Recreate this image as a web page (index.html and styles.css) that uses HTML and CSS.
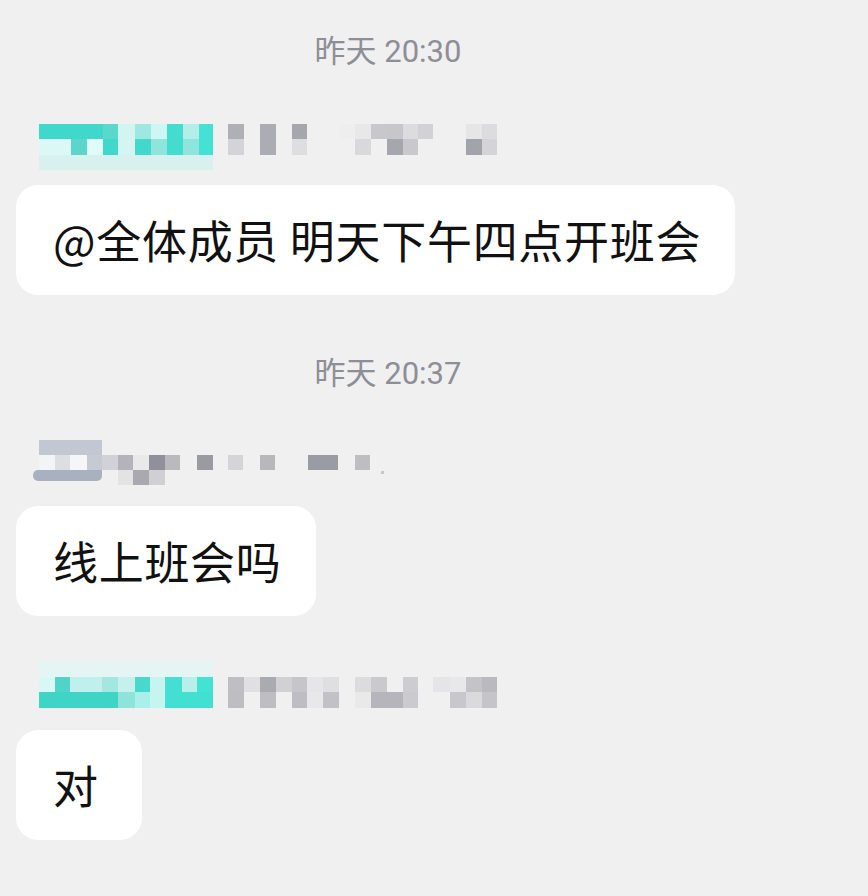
FILE: index.html
```html
<!DOCTYPE html>
<html lang="zh-CN">
<head>
<meta charset="utf-8">
<title>聊天</title>
<link rel="stylesheet" href="styles.css">
</head>
<body>
<div class="chat">
  <div class="time t1">昨天 20:30</div>

  <svg class="name n1" width="520" height="55" viewBox="0 120 520 55">
    <rect x="39" y="124" width="64" height="15" fill="#3fd8cb"/>
    <rect x="103" y="124" width="15" height="15" fill="#5ad8cd"/>
    <rect x="118" y="124" width="17" height="15" fill="#d2f5f2"/>
    <rect x="135" y="124" width="16" height="15" fill="#9fe8e1"/>
    <rect x="151" y="124" width="16" height="15" fill="#cdf7f4"/>
    <rect x="167" y="124" width="16" height="15" fill="#45dcd0"/>
    <rect x="183" y="124" width="16" height="15" fill="#b3eee9"/>
    <rect x="199" y="124" width="14" height="15" fill="#44e2d5"/>
    <rect x="39" y="139" width="32" height="16" fill="#dcf8f6"/>
    <rect x="71" y="139" width="16" height="16" fill="#5cd5ca"/>
    <rect x="87" y="139" width="16" height="16" fill="#e1fbf9"/>
    <rect x="103" y="139" width="15" height="16" fill="#3fd8cb"/>
    <rect x="118" y="139" width="17" height="16" fill="#d4f5f2"/>
    <rect x="135" y="139" width="16" height="16" fill="#42d8cb"/>
    <rect x="151" y="139" width="16" height="16" fill="#8fe4db"/>
    <rect x="167" y="139" width="16" height="16" fill="#45dcd0"/>
    <rect x="183" y="139" width="16" height="16" fill="#8fe4db"/>
    <rect x="199" y="139" width="14" height="16" fill="#44e2d5"/>
    <rect x="39" y="155" width="174" height="15" fill="#d8f1ee"/>
    <rect x="228" y="124" width="16" height="15" fill="#afafb6"/>
    <rect x="260" y="124" width="16" height="15" fill="#acacb3"/>
    <rect x="292" y="124" width="15" height="15" fill="#a6a6ad"/>
    <rect x="339" y="124" width="16" height="15" fill="#eeeeef"/>
    <rect x="355" y="124" width="16" height="15" fill="#e8e8e9"/>
    <rect x="371" y="124" width="16" height="15" fill="#c8c8cc"/>
    <rect x="387" y="124" width="16" height="15" fill="#c6c6cb"/>
    <rect x="403" y="124" width="15" height="15" fill="#dcdcdf"/>
    <rect x="418" y="124" width="15" height="15" fill="#d2d2d6"/>
    <rect x="466" y="124" width="16" height="15" fill="#e6e6e7"/>
    <rect x="482" y="124" width="15" height="15" fill="#dcdcdf"/>
    <rect x="228" y="139" width="16" height="16" fill="#d4d4d8"/>
    <rect x="260" y="139" width="16" height="16" fill="#acacb3"/>
    <rect x="292" y="139" width="15" height="16" fill="#dedee0"/>
    <rect x="355" y="139" width="16" height="16" fill="#d9d9dc"/>
    <rect x="387" y="139" width="16" height="16" fill="#a6a6ad"/>
    <rect x="403" y="139" width="15" height="16" fill="#c9c9cd"/>
    <rect x="466" y="139" width="16" height="16" fill="#a3a3ab"/>
    <rect x="482" y="139" width="15" height="16" fill="#d4d4d8"/>
  </svg>
  <div class="bubble b1">@全体成员 明天下午四点开班会</div>

  <div class="time t2">昨天 20:37</div>

  <svg class="name n2" width="520" height="55" viewBox="0 436 520 55">
    <rect x="39" y="440" width="63" height="15" fill="#c2c7d1"/>
    <rect x="39" y="455" width="16" height="15" fill="#f3f4f6"/>
    <rect x="55" y="455" width="15" height="15" fill="#dddee2"/>
    <rect x="70" y="455" width="17" height="15" fill="#f5f6f8"/>
    <rect x="87" y="455" width="15" height="15" fill="#c5cad3"/>
    <rect x="102" y="455" width="16" height="15" fill="#d1d2d7"/>
    <rect x="118" y="455" width="15" height="15" fill="#b3b3b9"/>
    <rect x="133" y="455" width="16" height="15" fill="#e9e9eb"/>
    <rect x="149" y="455" width="16" height="15" fill="#8f909a"/>
    <rect x="165" y="455" width="15" height="15" fill="#b9b9be"/>
    <rect x="197" y="455" width="16" height="15" fill="#9a9aa1"/>
    <rect x="228" y="455" width="15" height="15" fill="#d5d5d8"/>
    <rect x="260" y="455" width="15" height="15" fill="#b7b7bc"/>
    <rect x="308" y="455" width="30" height="15" fill="#9b9ba3"/>
    <rect x="355" y="455" width="15" height="15" fill="#bebec2"/>
    <rect x="33" y="470" width="69" height="11" rx="5" fill="#a9b1c1"/>
    <rect x="40" y="470" width="62" height="6" fill="#a9b1c1"/>
    <rect x="118" y="470" width="15" height="15" fill="#e3e3e5"/>
    <rect x="133" y="470" width="16" height="15" fill="#a9a9af"/>
    <rect x="149" y="470" width="16" height="15" fill="#d0d0d4"/>
    <rect x="381" y="471" width="3" height="3" fill="#c8c8cc"/>
  </svg>
  <div class="bubble b2">线上班会吗</div>

  <svg class="name n3" width="520" height="55" viewBox="0 655 520 55">
    <rect x="39" y="660" width="174" height="17" fill="#e4f5f3"/>
    <rect x="39" y="677" width="16" height="15" fill="#d8f8f5"/>
    <rect x="55" y="677" width="15" height="15" fill="#50d4c8"/>
    <rect x="70" y="677" width="32" height="15" fill="#c0f0eb"/>
    <rect x="102" y="677" width="16" height="15" fill="#a2e8e1"/>
    <rect x="118" y="677" width="17" height="15" fill="#c6f0ec"/>
    <rect x="135" y="677" width="15" height="15" fill="#48d9cc"/>
    <rect x="150" y="677" width="15" height="15" fill="#c6f4f0"/>
    <rect x="165" y="677" width="17" height="15" fill="#44dfd2"/>
    <rect x="182" y="677" width="15" height="15" fill="#b9efe9"/>
    <rect x="197" y="677" width="16" height="15" fill="#42e2d5"/>
    <rect x="39" y="692" width="79" height="16" fill="#3ed4c6"/>
    <rect x="118" y="692" width="17" height="16" fill="#8ee3da"/>
    <rect x="135" y="692" width="15" height="16" fill="#a9f0ea"/>
    <rect x="150" y="692" width="15" height="16" fill="#c5f5f1"/>
    <rect x="165" y="692" width="48" height="16" fill="#42e0d3"/>
    <rect x="228" y="677" width="16" height="15" fill="#bebec3"/>
    <rect x="244" y="677" width="16" height="15" fill="#e0e0e2"/>
    <rect x="260" y="677" width="16" height="15" fill="#aaaab1"/>
    <rect x="276" y="677" width="16" height="15" fill="#d1d1d4"/>
    <rect x="292" y="677" width="15" height="15" fill="#c6c6ca"/>
    <rect x="307" y="677" width="16" height="15" fill="#e6e6e8"/>
    <rect x="323" y="677" width="16" height="15" fill="#dfdfe1"/>
    <rect x="355" y="677" width="16" height="15" fill="#dcdcdf"/>
    <rect x="371" y="677" width="16" height="15" fill="#cacace"/>
    <rect x="403" y="677" width="15" height="15" fill="#cdcdd1"/>
    <rect x="433" y="677" width="17" height="15" fill="#e5e5e7"/>
    <rect x="450" y="677" width="16" height="15" fill="#e8e8ea"/>
    <rect x="466" y="677" width="16" height="15" fill="#c3c3c8"/>
    <rect x="482" y="677" width="15" height="15" fill="#b9b9bf"/>
    <rect x="228" y="692" width="16" height="16" fill="#bdbdc2"/>
    <rect x="260" y="692" width="16" height="16" fill="#bdbdc2"/>
    <rect x="292" y="692" width="15" height="16" fill="#bdbdc2"/>
    <rect x="307" y="692" width="16" height="16" fill="#e8e8ea"/>
    <rect x="323" y="692" width="16" height="16" fill="#c1c1c6"/>
    <rect x="355" y="692" width="16" height="16" fill="#e9e9ea"/>
    <rect x="371" y="692" width="32" height="16" fill="#b5b5bb"/>
    <rect x="403" y="692" width="15" height="16" fill="#cbcbcf"/>
    <rect x="450" y="692" width="16" height="16" fill="#c8c8cc"/>
    <rect x="466" y="692" width="16" height="16" fill="#dadadd"/>
    <rect x="482" y="692" width="15" height="16" fill="#c4c4c9"/>
  </svg>
  <div class="bubble b3">对</div>
</div>
</body>
</html>
```

FILE: styles.css
```css
html, body {
  margin: 0;
  padding: 0;
  background: #f0f0f0;
}

body {
  width: 868px;
  height: 896px;
  overflow: hidden;
  font-family: "Noto Sans CJK SC", "Noto Sans", sans-serif;
}

.chat {
  display: flex;
  flex-direction: column;
  align-items: flex-start;
}

.time {
  width: 776px;
  height: 40px;
  line-height: 40px;
  text-align: center;
  font-family: Roboto, "Noto Sans CJK SC", sans-serif;
  font-size: 31px;
  color: #8e8e96;
}

.t1 { margin-top: 32px; }
.t2 { margin-top: 59px; }

.name {
  display: block;
}

.n1 { margin-top: 48px; }
.n2 { margin-top: 42px; }
.n3 { margin-top: 39px; }

.bubble {
  box-sizing: border-box;
  margin-left: 16px;
  min-width: 126px;
  height: 110px;
  line-height: 110px;
  padding: 0 34px 0 37px;
  background: #ffffff;
  border-radius: 22px;
  font-size: 45px;
  letter-spacing: 0.7px;
  color: #111111;
  white-space: nowrap;
}

.b1 { margin-top: 10px; }
.b2 { margin-top: 15px; }
.b3 { margin-top: 20px; }
```
